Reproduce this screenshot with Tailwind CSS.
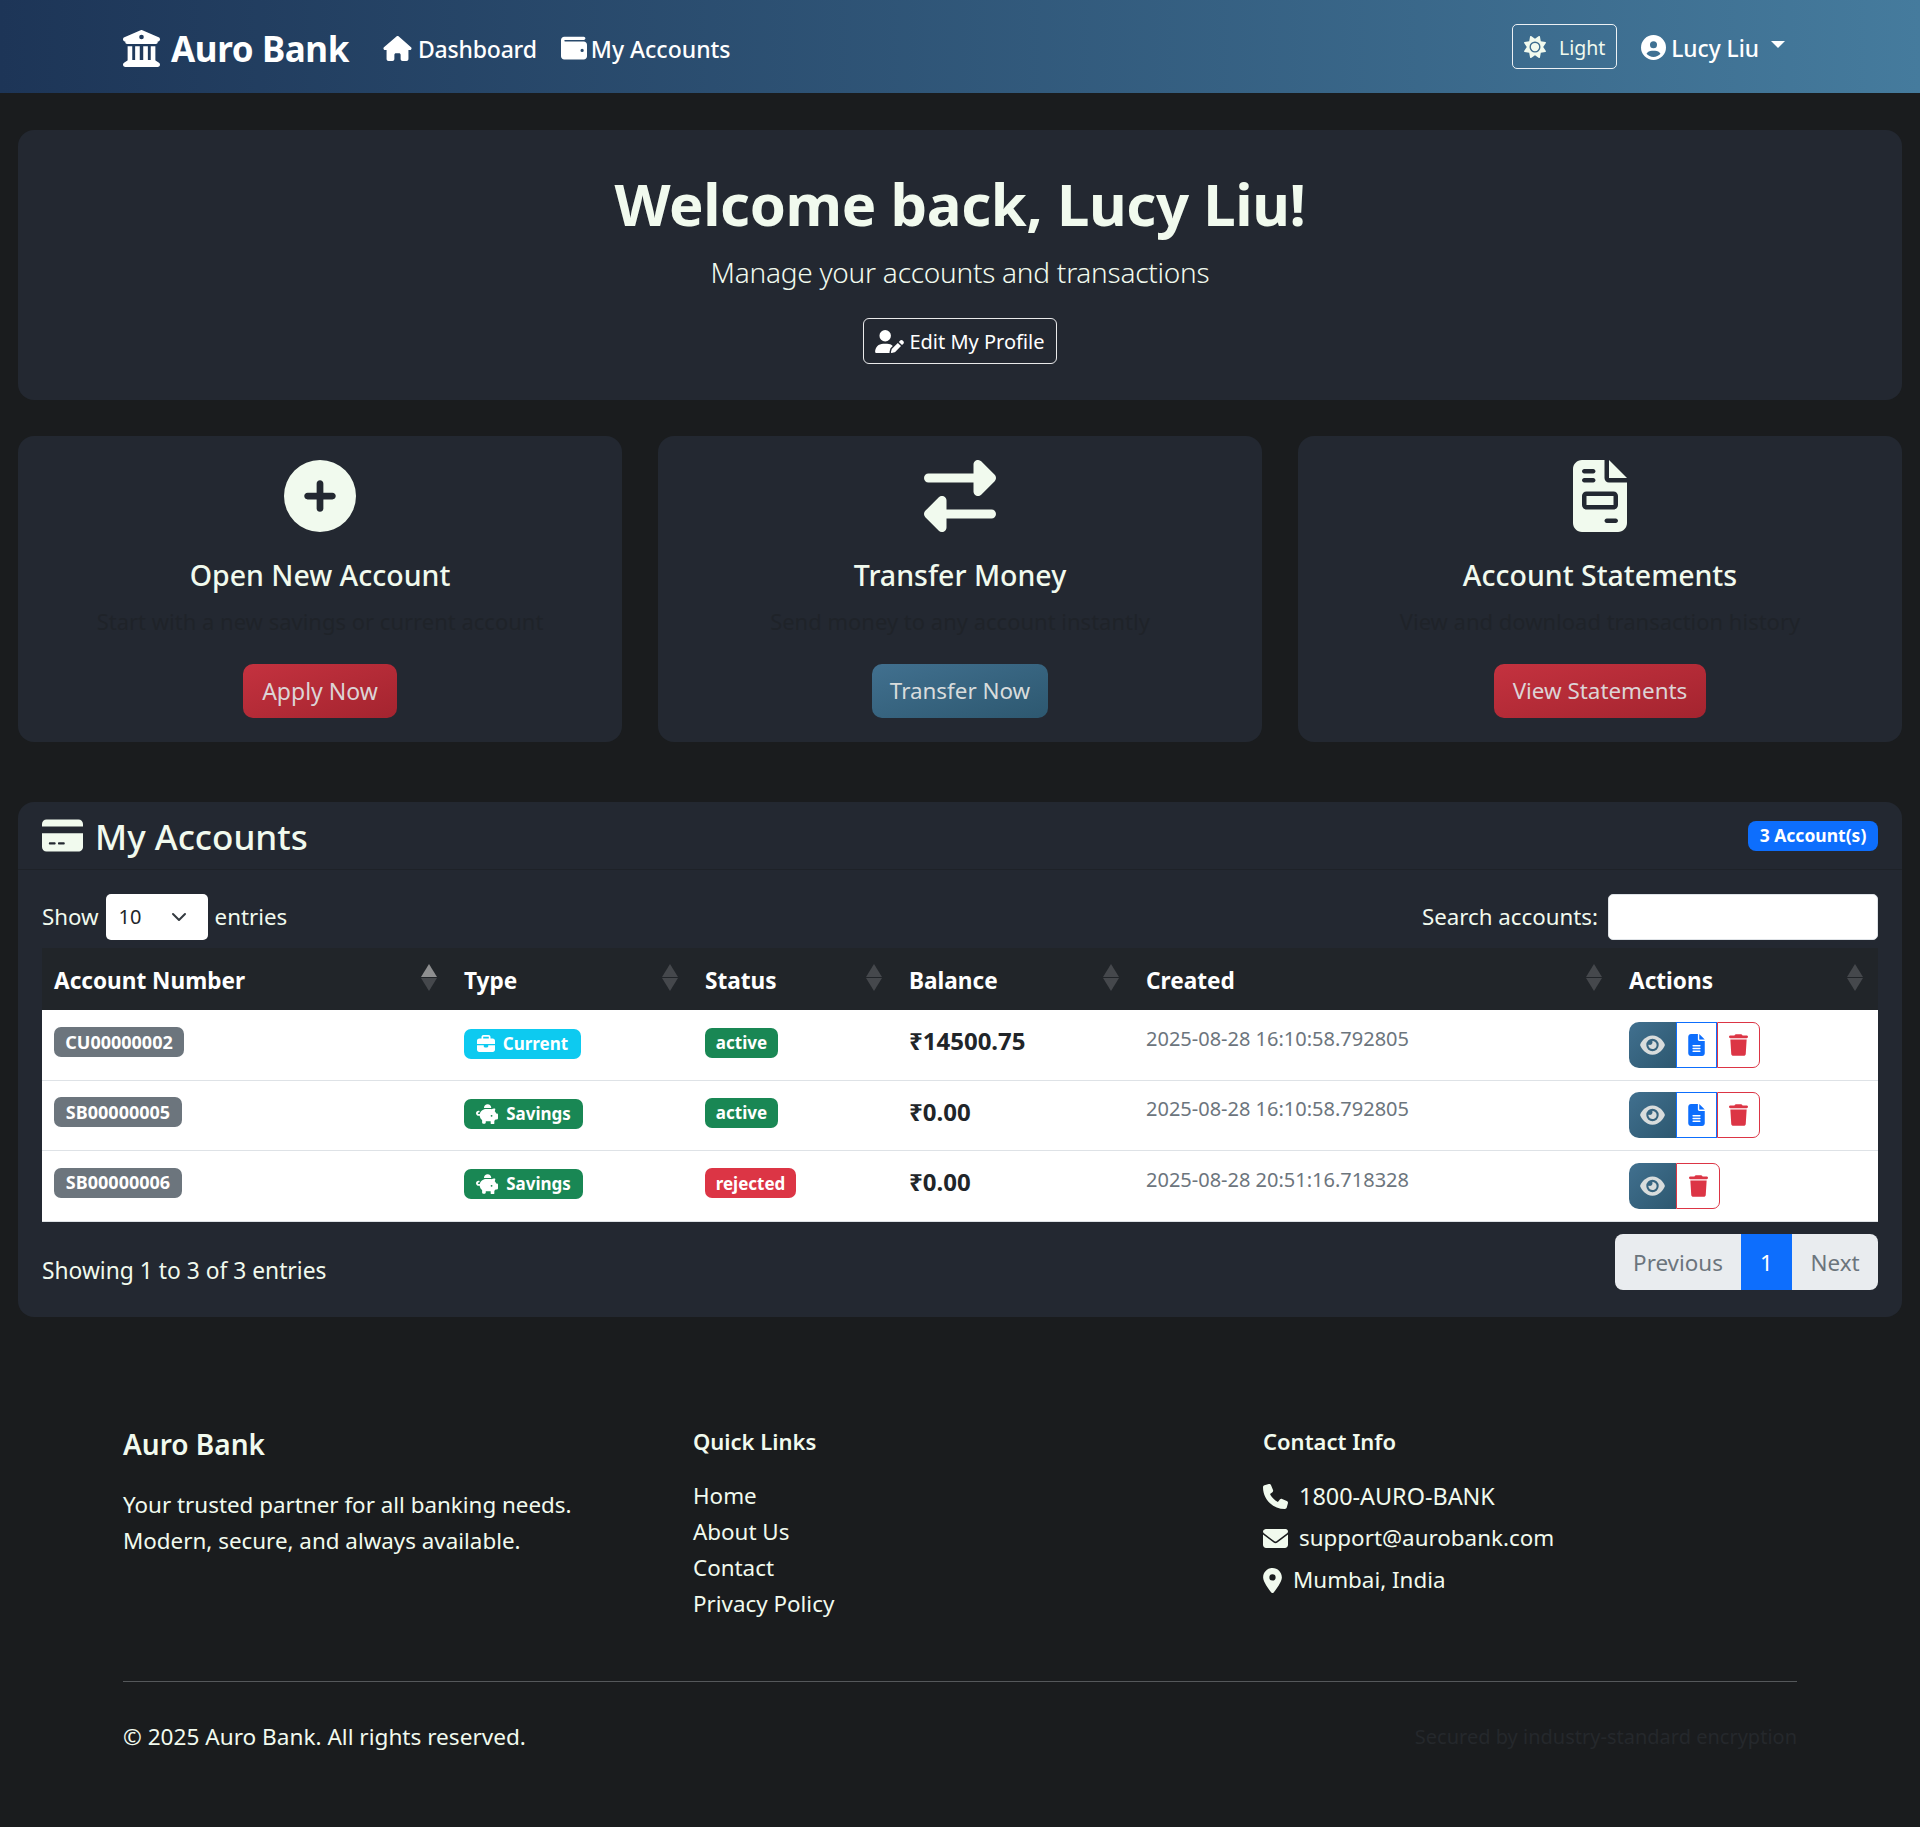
<!DOCTYPE html>
<html lang="en">
<head>
  <meta charset="UTF-8" />
  <meta name="viewport" content="width=device-width, initial-scale=1.0" />
  <title>Dashboard - Auro Bank</title>
  <script src="https://cdn.jsdelivr.net/npm/@tailwindcss/browser@4"></script>
</head>
<body class="bg-[#1a1c1e] text-[#f1faee] font-['Noto_Sans',sans-serif] text-[20px] min-h-[1827px]">
  <!-- icons -->
  <svg class="hidden">
    <symbol id="i-bank" viewBox="0 0 512 512"><path d="M243.4 2.6l-224 96c-14 6-21.8 21-18.7 35.8S16.8 160 32 160v8c0 13.3 10.7 24 24 24H456c13.3 0 24-10.7 24-24v-8c15.2 0 28.3-10.7 31.3-25.6s-4.8-29.9-18.7-35.8l-224-96c-8-3.4-17.2-3.4-25.2 0zM128 224H64V420.3c-.6 .3-1.2 .7-1.8 1.1l-48 32c-11.7 7.8-17 22.4-12.9 35.9S17.9 512 32 512H480c14.1 0 26.5-9.2 30.6-22.7s-1.1-28.1-12.9-35.9l-48-32c-.6-.4-1.2-.7-1.8-1.1V224H384V416H344V224H280V416H232V224H168V416H128V224zM256 64a32 32 0 1 1 0 64 32 32 0 1 1 0-64z"/></symbol>
    <symbol id="i-house" viewBox="0 0 576 512"><path d="M575.8 255.5c0 18-15 32.1-32 32.1h-32l.7 160.2c0 2.7-.2 5.4-.5 8.1V472c0 22.1-17.9 40-40 40H456c-1.1 0-2.2 0-3.3-.1c-1.4 .1-2.8 .1-4.2 .1H416 392c-22.1 0-40-17.9-40-40V448 384c0-17.7-14.3-32-32-32H256c-17.7 0-32 14.3-32 32v64 24c0 22.1-17.9 40-40 40H160 128.1c-1.5 0-3-.1-4.5-.2c-1.2 .1-2.4 .2-3.6 .2H104c-22.1 0-40-17.9-40-40V360c0-.9 0-1.9 .1-2.8V287.6H32c-18 0-32-14-32-32.1c0-9 3-17 10-24L266.4 8c7-7 15-8 22-8s15 2 21 7L564.8 231.5c8 7 12 15 11 24z"/></symbol>
    <symbol id="i-wallet" viewBox="0 0 512 512"><path d="M64 32C28.7 32 0 60.7 0 96V416c0 35.3 28.7 64 64 64H448c35.3 0 64-28.7 64-64V192c0-35.3-28.7-64-64-64H80c-8.8 0-16-7.2-16-16s7.2-16 16-16H448c17.7 0 32-14.3 32-32s-14.3-32-32-32H64zM416 272a32 32 0 1 1 0 64 32 32 0 1 1 0-64z"/></symbol>
    <symbol id="i-sun" viewBox="0 0 512 512"><path d="M361.5 1.2c5 2.1 8.6 6.6 9.6 11.9L391 121l107.9 19.8c5.3 1 9.8 4.6 11.9 9.6s1.5 10.7-1.6 15.2L446.9 256l62.3 90.3c3.1 4.5 3.7 10.2 1.6 15.2s-6.6 8.6-11.9 9.6L391 391 371.1 498.9c-1 5.3-4.6 9.8-9.6 11.9s-10.7 1.5-15.2-1.6L256 446.9l-90.3 62.3c-4.5 3.1-10.2 3.7-15.2 1.6s-8.6-6.6-9.6-11.9L121 391 13.1 371.1c-5.3-1-9.8-4.6-11.9-9.6s-1.5-10.7 1.6-15.2L65.1 256 2.8 165.7c-3.1-4.5-3.7-10.2-1.6-15.2s6.6-8.6 11.9-9.6L121 121 140.9 13.1c1-5.3 4.6-9.8 9.6-11.9s10.7-1.5 15.2 1.6L256 65.1 346.3 2.8c4.5-3.1 10.2-3.7 15.2-1.6zM160 256a96 96 0 1 1 192 0 96 96 0 1 1 -192 0zm224 0a128 128 0 1 0 -256 0 128 128 0 1 0 256 0z"/></symbol>
    <symbol id="i-user" viewBox="0 0 512 512"><path d="M399 384.2C376.9 345.8 335.4 320 288 320H224c-47.4 0-88.9 25.8-111 64.2c35.2 39.2 86.2 63.8 143 63.8s107.8-24.7 143-63.8zM0 256a256 256 0 1 1 512 0A256 256 0 1 1 0 256zm256 16a72 72 0 1 0 0-144 72 72 0 1 0 0 144z"/></symbol>
    <symbol id="i-userpen" viewBox="0 0 640 512"><path d="M224 256A128 128 0 1 0 224 0a128 128 0 1 0 0 256zm-45.7 48C79.8 304 0 383.8 0 482.3C0 498.7 13.3 512 29.7 512H322.8c-3.1-8.8-3.7-18.4-1.4-27.8l15-60.1c2.8-11.3 8.6-21.5 16.8-29.7l40.3-40.3c-32.1-31-75.7-50.1-123.9-50.1H178.3zm435.5-68.3c-15.6-15.6-40.9-15.6-56.6 0l-29.4 29.4 71 71 29.4-29.4c15.6-15.6 15.6-40.9 0-56.6l-14.4-14.4zM375.9 417c-4.1 4.1-7 9.2-8.4 14.9l-15 60.1c-1.4 5.5 .2 11.2 4.2 15.2s9.7 5.6 15.2 4.2l60.1-15c5.6-1.4 10.8-4.3 14.9-8.4L576.1 358.7l-71-71L375.9 417z"/></symbol>
    <symbol id="i-plus" viewBox="0 0 512 512"><path d="M256 512A256 256 0 1 0 256 0a256 256 0 1 0 0 512zM232 344V280H168c-13.3 0-24-10.7-24-24s10.7-24 24-24h64V168c0-13.3 10.7-24 24-24s24 10.7 24 24v64h64c13.3 0 24 10.7 24 24s-10.7 24-24 24H280v64c0 13.3-10.7 24-24 24s-24-10.7-24-24z"/></symbol>
    <symbol id="i-exchange" viewBox="0 0 512 512"><path d="M32 96l320 0V32c0-12.900 7.800-24.600 19.800-29.600s25.700-2.200 34.900 6.900l96 96c6 6 9.400 14.100 9.400 22.600s-3.400 16.700-9.400 22.600l-96 96c-9.200 9.200-22.900 11.900-34.900 6.900s-19.800-16.600-19.800-29.600V160L32 160c-17.700 0-32-14.300-32-32s14.300-32 32-32zM480 352c17.700 0 32 14.300 32 32s-14.300 32-32 32H160v64c0 12.900-7.800 24.600-19.800 29.600s-25.700 2.200-34.900-6.900l-96-96c-6-6-9.400-14.100-9.400-22.600s3.400-16.700 9.400-22.600l96-96c9.200-9.200 22.900-11.900 34.900-6.900s19.800 16.600 19.800 29.600l0 64H480z"/></symbol>
    <symbol id="i-invoice" viewBox="0 0 384 512"><path d="M64 0C28.700 0 0 28.700 0 64V448c0 35.300 28.700 64 64 64H320c35.300 0 64-28.700 64-64V160H256c-17.700 0-32-14.300-32-32V0H64zM256 0V128H384L256 0zM80 64h64c8.800 0 16 7.200 16 16s-7.200 16-16 16H80c-8.800 0-16-7.200-16-16s7.200-16 16-16zm0 64h64c8.800 0 16 7.200 16 16s-7.200 16-16 16H80c-8.800 0-16-7.200-16-16s7.200-16 16-16zm16 96H288c17.700 0 32 14.300 32 32v64c0 17.700-14.300 32-32 32H96c-17.700 0-32-14.300-32-32V256c0-17.700 14.300-32 32-32zm0 32v64H288V256H96zM240 416h64c8.800 0 16 7.200 16 16s-7.200 16-16 16H240c-8.800 0-16-7.200-16-16s7.200-16 16-16z"/></symbol>
    <symbol id="i-card" viewBox="0 0 576 512"><path d="M64 32C28.700 32 0 60.700 0 96v32H576V96c0-35.300-28.700-64-64-64H64zM576 224H0V416c0 35.300 28.700 64 64 64H512c35.300 0 64-28.700 64-64V224zM112 352h64c8.800 0 16 7.200 16 16s-7.200 16-16 16H112c-8.800 0-16-7.200-16-16s7.200-16 16-16zm112 16c0-8.800 7.200-16 16-16H304c8.800 0 16 7.200 16 16s-7.200 16-16 16H240c-8.800 0-16-7.200-16-16z"/></symbol>
    <symbol id="i-brief" viewBox="0 0 512 512"><path d="M184 48H328c4.400 0 8 3.600 8 8V96H176V56c0-4.400 3.600-8 8-8zm-56 8V96H64C28.700 96 0 124.700 0 160v96H192 320 512V160c0-35.300-28.700-64-64-64H384V56c0-30.900-25.100-56-56-56H184c-30.900 0-56 25.100-56 56zM512 288H320v32c0 17.700-14.300 32-32 32H224c-17.700 0-32-14.300-32-32V288H0V416c0 35.300 28.700 64 64 64H448c35.300 0 64-28.700 64-64V288z"/></symbol>
    <symbol id="i-piggy" viewBox="0 0 576 512"><path d="M400 96v.7c-5.300-.4-10.600-.7-16-.7H256c-16.500 0-32.500 2.100-47.800 6-.1-2-.2-4-.2-6 0-53 43-96 96-96s96 43 96 96zm-16 32c3.500 0 7 .1 10.400 .3 4.200 .3 8.400 .7 12.600 1.300C424.600 116.900 447 112 472 112h18c10.400 0 18 9.800 15.500 19.900l-13.800 55.200c15.800 14.800 28.700 32.800 37.500 52.900H544c17.700 0 32 14.300 32 32v96c0 17.700-14.300 32-32 32H512c-9.100 12.100-19.900 22.900-32 32v64c0 17.700-14.300 32-32 32H416c-17.700 0-32-14.300-32-32V448H256v32c0 17.700-14.300 32-32 32H192c-17.700 0-32-14.300-32-32V416c-34.900-26.200-58.700-66.300-63.200-112H68c-37.600 0-68-30.400-68-68s30.400-68 68-68h4c13.300 0 24 10.700 24 24s-10.700 24-24 24H68c-11 0-20 9-20 20s9 20 20 20h31.200c12.100-59.800 57.700-107.500 116.300-122.800C230.400 131 243 128 256 128H384zm48 176a24 24 0 1 0-48 0 24 24 0 1 0 48 0z"/></symbol>
    <symbol id="i-eye" viewBox="0 0 576 512"><path d="M288 32c-80.800 0-145.500 36.800-192.600 80.600C48.600 156 17.300 208 2.500 243.700c-3.300 7.900-3.300 16.700 0 24.600C17.300 304 48.600 356 95.400 399.400C142.500 443.200 207.200 480 288 480s145.500-36.800 192.600-80.600c46.800-43.500 78.100-95.400 93-131.100c3.300-7.900 3.300-16.700 0-24.600c-14.900-35.700-46.200-87.700-93-131.100C433.500 68.800 368.800 32 288 32zM144 256a144 144 0 1 1 288 0 144 144 0 1 1 -288 0zm144-64c0 35.300-28.700 64-64 64c-7.100 0-13.900-1.200-20.300-3.300c-5.500-1.800-11.900 1.600-11.700 7.400c.3 6.900 1.300 13.800 3.200 20.700c13.700 51.200 66.400 81.600 117.600 67.900s81.600-66.400 67.900-117.600c-11.100-41.500-47.800-69.400-88.600-71.100c-5.800-.2-9.200 6.100-7.400 11.700c2.100 6.400 3.300 13.200 3.300 20.300z"/></symbol>
    <symbol id="i-file" viewBox="0 0 384 512"><path d="M64 0C28.700 0 0 28.700 0 64V448c0 35.300 28.700 64 64 64H320c35.300 0 64-28.700 64-64V160H256c-17.700 0-32-14.300-32-32V0H64zM256 0V128H384L256 0zM112 256H272c8.800 0 16 7.200 16 16s-7.200 16-16 16H112c-8.800 0-16-7.200-16-16s7.200-16 16-16zm0 64H272c8.800 0 16 7.200 16 16s-7.200 16-16 16H112c-8.800 0-16-7.200-16-16s7.200-16 16-16zm0 64H272c8.800 0 16 7.200 16 16s-7.200 16-16 16H112c-8.800 0-16-7.200-16-16s7.200-16 16-16z"/></symbol>
    <symbol id="i-trash" viewBox="0 0 448 512"><path d="M135.200 17.700L128 32H32C14.300 32 0 46.300 0 64S14.300 96 32 96H416c17.700 0 32-14.300 32-32s-14.300-32-32-32H320l-7.200-14.300C307.400 6.800 296.300 0 284.200 0H163.800c-12.100 0-23.200 6.800-28.600 17.700zM416 128H32L53.200 467c1.600 25.300 22.600 45 47.900 45H346.900c25.300 0 46.300-19.700 47.900-45L416 128z"/></symbol>
    <symbol id="i-phone" viewBox="0 0 512 512"><path d="M164.900 24.600c-7.700-18.600-28-28.500-47.400-23.200l-88 24C12.100 30.200 0 46 0 64C0 311.400 200.600 512 448 512c18 0 33.800-12.100 38.600-29.500l24-88c5.300-19.400-4.600-39.700-23.200-47.400l-96-40c-16.300-6.800-35.200-2.100-46.300 11.600L304.700 368C234.300 334.700 177.300 277.700 144 207.300L193.300 167c13.700-11.200 18.400-30 11.600-46.300l-40-96z"/></symbol>
    <symbol id="i-mail" viewBox="0 0 512 512"><path d="M48 64C21.500 64 0 85.500 0 112c0 15.100 7.100 29.300 19.200 38.400L236.800 313.600c11.400 8.500 27 8.500 38.400 0L492.800 150.400c12.100-9.100 19.200-23.300 19.200-38.400c0-26.500-21.500-48-48-48H48zM0 176V384c0 35.300 28.700 64 64 64H448c35.300 0 64-28.700 64-64V176L294.400 339.200c-22.800 17.100-54 17.100-76.800 0L0 176z"/></symbol>
    <symbol id="i-pin" viewBox="0 0 384 512"><path d="M215.700 499.200C267 435 384 279.400 384 192C384 86 298 0 192 0S0 86 0 192c0 87.400 117 243 168.300 307.200c12.300 15.300 35.100 15.300 47.400 0zM192 128a64 64 0 1 1 0 128 64 64 0 1 1 0-128z"/></symbol>
    <symbol id="i-sort" viewBox="0 0 16 27"><path d="M8 0L16 13H0z"/><path d="M0 14H16L8 27z"/></symbol>
  </svg>

  <!-- Navbar -->
  <nav class="h-[93px] bg-gradient-to-r from-[#1d3557] to-[#457b9d] flex items-center justify-between pl-[123px] pr-[135px] text-white">
    <div class="flex items-center mt-[5px]">
      <a class="flex items-center gap-[11px] text-[35px] tracking-[-0.4px] font-bold mr-[34px]">
        <svg class="w-[37px] h-[37px] fill-current -mt-[2px]"><use href="#i-bank"/></svg>Auro Bank
      </a>
      <a class="flex items-center gap-[6px] text-[23px] tracking-[-0.2px] font-medium mr-[24px]">
        <svg class="w-[29px] h-[25px] fill-current -mt-[2px]"><use href="#i-house"/></svg>Dashboard
      </a>
      <a class="flex items-center gap-[4px] text-[23px] font-medium">
        <svg class="w-[26px] h-[26px] fill-current -mt-[2px]"><use href="#i-wallet"/></svg>My Accounts
      </a>
    </div>
    <div class="flex items-center">
      <button class="w-[105px] h-[45px] pt-[2px] border border-white/90 rounded-[5px] flex items-center justify-center gap-[13px] text-[19.5px] text-[#f1faee] mr-[24px]">
        <svg class="w-[22px] h-[22px] fill-current -mt-[2px]"><use href="#i-sun"/></svg>Light
      </button>
      <a class="flex items-center gap-[5px] text-[22.7px] font-medium mt-[5px]">
        <svg class="w-[25px] h-[25px] fill-current -mt-[3px]"><use href="#i-user"/></svg>Lucy Liu
        <span class="ml-[7px] mb-[9px] border-x-[7px] border-t-[7px] border-x-transparent border-t-white"></span>
      </a>
    </div>
  </nav>

  <main class="px-[18px]">
    <!-- Welcome -->
    <section class="mt-[37px] h-[270px] bg-[#232831] rounded-[16px] flex flex-col items-center pt-[38px]">
      <h1 class="text-[58px] tracking-[-0.4px] leading-[72px] font-bold">Welcome back, Lucy Liu!</h1>
      <p class="mt-[13px] text-[28px] tracking-[-0.25px] leading-[38px] font-light">Manage your accounts and transactions</p>
      <a class="mt-[27px] w-[194px] h-[46px] pt-[1px] border border-white/90 rounded-[6px] flex items-center justify-center gap-[5px] text-[20px] text-white">
        <svg class="w-[29px] h-[23px] fill-current"><use href="#i-userpen"/></svg>Edit My Profile
      </a>
    </section>

    <!-- Quick actions -->
    <section class="mt-[36px] grid grid-cols-3 gap-[36px]">
      <div class="h-[306px] bg-[#232831] rounded-[16px] flex flex-col items-center pt-[24px]">
        <svg class="w-[72px] h-[72px] fill-current"><use href="#i-plus"/></svg>
        <h5 class="mt-[24px] text-[28.5px] leading-[38px] font-medium">Open New Account</h5>
        <p class="mt-[12px] text-[22px] leading-[30px] text-[#1f2329]">Start with a new savings or current account</p>
        <a class="mt-[28px] w-[154px] h-[54px] rounded-[10px] bg-gradient-to-br from-[#c4323f] to-[#a4242f] text-[#dcd4d6] text-[23px] flex items-center justify-center">Apply Now</a>
      </div>
      <div class="h-[306px] bg-[#232831] rounded-[16px] flex flex-col items-center pt-[24px]">
        <svg class="w-[72px] h-[72px] fill-current"><use href="#i-exchange"/></svg>
        <h5 class="mt-[24px] text-[28.5px] leading-[38px] font-medium">Transfer Money</h5>
        <p class="mt-[12px] text-[22px] leading-[30px] text-[#1f2329]">Send money to any account instantly</p>
        <a class="mt-[28px] w-[176px] h-[54px] rounded-[10px] bg-gradient-to-br from-[#41708f] to-[#2d5870] text-[#d8dcdc] text-[22.4px] flex items-center justify-center">Transfer Now</a>
      </div>
      <div class="h-[306px] bg-[#232831] rounded-[16px] flex flex-col items-center pt-[24px]">
        <svg class="w-[54px] h-[72px] fill-current"><use href="#i-invoice"/></svg>
        <h5 class="mt-[24px] text-[28.5px] leading-[38px] font-medium">Account Statements</h5>
        <p class="mt-[12px] text-[22px] leading-[30px] text-[#1f2329]">View and download transaction history</p>
        <a class="mt-[28px] w-[212px] h-[54px] rounded-[10px] bg-gradient-to-br from-[#c4323f] to-[#a4242f] text-[#dcd4d6] text-[22.4px] flex items-center justify-center">View Statements</a>
      </div>
    </section>

    <!-- Accounts table -->
    <section class="mt-[60px] h-[515px] bg-[#232831] rounded-[16px]">
      <div class="h-[68px] border-b border-[#1e2228] flex items-center justify-between px-[24px]">
        <h4 class="flex items-center gap-[12px] text-[35px] font-medium">
          <svg class="w-[41px] h-[37px] fill-current"><use href="#i-card"/></svg><span class="pt-[3px]">My Accounts</span>
        </h4>
        <span class="w-[130px] h-[30px] rounded-[8px] bg-[#0d6efd] text-white text-[17.5px] font-bold flex items-center justify-center">3 Account(s)</span>
      </div>
      <div class="px-[24px]">
        <div class="mt-[24px] h-[46px] flex items-center justify-between">
          <div class="flex items-center text-[22.3px]">
            Show
            <span class="ml-[7px] mr-[7px] w-[102px] h-[46px] bg-white rounded-[5px] text-[#212529] text-[20px] flex items-center justify-between pl-[13px] pr-[21px]">
              10
              <svg class="w-[16px] h-[16px]" viewBox="0 0 16 16" fill="none" stroke="#343a40" stroke-width="2" stroke-linecap="round" stroke-linejoin="round"><path d="M2 5l6 6 6-6"/></svg>
            </span>
            entries
          </div>
          <div class="flex items-center text-[22.3px]">
            Search accounts:
            <input class="ml-[10px] w-[270px] h-[46px] bg-white rounded-[5px] border border-[#dee2e6]" />
          </div>
        </div>

        <table class="mt-[8px] w-[1836px] table-fixed border-collapse">
          <colgroup><col class="w-[410px]"><col class="w-[241px]"><col class="w-[204px]"><col class="w-[237px]"><col class="w-[483px]"><col class="w-[261px]"></colgroup>
          <thead class="bg-[#212529] text-white text-left text-[22.6px]">
            <tr class="h-[62px]">
              <th class="px-[12px] pt-[2px] font-bold"><div class="flex items-center justify-between pr-[3px]"><span class="pt-[2px]">Account Number</span><svg class="w-[16px] h-[27px] -mt-[4px]" viewBox="0 0 16 27"><path d="M8 0L16 13H0z" fill="#8e8f90"/><path d="M0 14H16L8 27z" fill="#45484c"/></svg></div></th>
              <th class="px-[12px] pt-[2px] font-bold"><div class="flex items-center justify-between pr-[3px]"><span class="pt-[2px]">Type</span><svg class="w-[16px] h-[27px] -mt-[4px] text-[#45484c] fill-current"><use href="#i-sort"/></svg></div></th>
              <th class="px-[12px] pt-[2px] font-bold"><div class="flex items-center justify-between pr-[3px]"><span class="pt-[2px]">Status</span><svg class="w-[16px] h-[27px] -mt-[4px] text-[#45484c] fill-current"><use href="#i-sort"/></svg></div></th>
              <th class="px-[12px] pt-[2px] font-bold"><div class="flex items-center justify-between pr-[3px]"><span class="pt-[2px]">Balance</span><svg class="w-[16px] h-[27px] -mt-[4px] text-[#45484c] fill-current"><use href="#i-sort"/></svg></div></th>
              <th class="px-[12px] pt-[2px] font-bold"><div class="flex items-center justify-between pr-[3px]"><span class="pt-[2px]">Created</span><svg class="w-[16px] h-[27px] -mt-[4px] text-[#45484c] fill-current"><use href="#i-sort"/></svg></div></th>
              <th class="px-[12px] pt-[2px] font-bold"><div class="flex items-center justify-between pr-[3px]"><span class="pt-[2px]">Actions</span><svg class="w-[16px] h-[27px] -mt-[4px] text-[#45484c] fill-current"><use href="#i-sort"/></svg></div></th>
            </tr>
          </thead>
          <tbody class="bg-white text-[#212529]">
            <tr class="h-[70px] border-b border-[#dee2e6]">
              <td class="px-[12px] pb-[6px]"><span class="inline-flex items-center justify-center w-[130px] h-[30px] rounded-[7px] bg-[#6c757d] text-white text-[18px] font-bold">CU00000002</span></td>
              <td class="px-[12px]"><span class="inline-flex items-center justify-center gap-[8px] w-[117px] h-[30px] rounded-[7px] bg-[#0dcaf0] text-white text-[17px] font-bold"><svg class="w-[18px] h-[18px] fill-current"><use href="#i-brief"/></svg>Current</span></td>
              <td class="px-[12px] pb-[5px]"><span class="inline-flex items-center justify-center w-[73px] h-[30px] rounded-[7px] bg-[#198754] text-white text-[17px] font-bold">active</span></td>
              <td class="px-[12px] pb-[7px] text-[24px] font-bold">₹14500.75</td>
              <td class="px-[12px] pb-[12px] text-[20px] text-[#6c757d]">2025-08-28 16:10:58.792805</td>
              <td class="px-[12px]">
                <div class="flex h-[46px]">
                  <a class="w-[47px] rounded-l-[10px] bg-gradient-to-br from-[#41708f] to-[#2d5870] text-[#d8dcdc] flex items-center justify-center"><svg class="w-[25px] h-[22px] fill-current"><use href="#i-eye"/></svg></a>
                  <a class="w-[41px] border border-[#0d6efd] text-[#0d6efd] flex items-center justify-center"><svg class="w-[17px] h-[22px] fill-current"><use href="#i-file"/></svg></a>
                  <a class="w-[43px] border border-[#dc3545] rounded-r-[7px] text-[#dc3545] flex items-center justify-center"><svg class="w-[19px] h-[22px] fill-current"><use href="#i-trash"/></svg></a>
                </div>
              </td>
            </tr>
            <tr class="h-[70px] border-b border-[#dee2e6]">
              <td class="px-[12px] pb-[6px]"><span class="inline-flex items-center justify-center w-[128px] h-[30px] rounded-[7px] bg-[#6c757d] text-white text-[18px] font-bold">SB00000005</span></td>
              <td class="px-[12px]"><span class="inline-flex items-center justify-center gap-[8px] w-[119px] h-[30px] rounded-[7px] bg-[#198754] text-white text-[17px] font-bold"><svg class="w-[22px] h-[20px] fill-current"><use href="#i-piggy"/></svg>Savings</span></td>
              <td class="px-[12px] pb-[5px]"><span class="inline-flex items-center justify-center w-[73px] h-[30px] rounded-[7px] bg-[#198754] text-white text-[17px] font-bold">active</span></td>
              <td class="px-[12px] pb-[7px] text-[24px] font-bold">₹0.00</td>
              <td class="px-[12px] pb-[12px] text-[20px] text-[#6c757d]">2025-08-28 16:10:58.792805</td>
              <td class="px-[12px]">
                <div class="flex h-[46px]">
                  <a class="w-[47px] rounded-l-[10px] bg-gradient-to-br from-[#41708f] to-[#2d5870] text-[#d8dcdc] flex items-center justify-center"><svg class="w-[25px] h-[22px] fill-current"><use href="#i-eye"/></svg></a>
                  <a class="w-[41px] border border-[#0d6efd] text-[#0d6efd] flex items-center justify-center"><svg class="w-[17px] h-[22px] fill-current"><use href="#i-file"/></svg></a>
                  <a class="w-[43px] border border-[#dc3545] rounded-r-[7px] text-[#dc3545] flex items-center justify-center"><svg class="w-[19px] h-[22px] fill-current"><use href="#i-trash"/></svg></a>
                </div>
              </td>
            </tr>
            <tr class="h-[71px] border-b border-[#dee2e6]">
              <td class="px-[12px] pb-[6px]"><span class="inline-flex items-center justify-center w-[128px] h-[30px] rounded-[7px] bg-[#6c757d] text-white text-[18px] font-bold">SB00000006</span></td>
              <td class="px-[12px]"><span class="inline-flex items-center justify-center gap-[8px] w-[119px] h-[30px] rounded-[7px] bg-[#198754] text-white text-[17px] font-bold"><svg class="w-[22px] h-[20px] fill-current"><use href="#i-piggy"/></svg>Savings</span></td>
              <td class="px-[12px] pb-[5px]"><span class="inline-flex items-center justify-center w-[91px] h-[30px] rounded-[7px] bg-[#dc3545] text-white text-[17px] font-bold">rejected</span></td>
              <td class="px-[12px] pb-[7px] text-[24px] font-bold">₹0.00</td>
              <td class="px-[12px] pb-[12px] text-[20px] text-[#6c757d]">2025-08-28 20:51:16.718328</td>
              <td class="px-[12px]">
                <div class="flex h-[46px]">
                  <a class="w-[47px] rounded-l-[10px] bg-gradient-to-br from-[#41708f] to-[#2d5870] text-[#d8dcdc] flex items-center justify-center"><svg class="w-[25px] h-[22px] fill-current"><use href="#i-eye"/></svg></a>
                  <a class="w-[44px] border border-[#dc3545] rounded-r-[7px] text-[#dc3545] flex items-center justify-center"><svg class="w-[19px] h-[22px] fill-current"><use href="#i-trash"/></svg></a>
                </div>
              </td>
            </tr>
          </tbody>
        </table>

        <div class="mt-[12px] flex items-start justify-between">
          <div class="mt-[19px] text-[22.8px] leading-[36px]">Showing 1 to 3 of 3 entries</div>
          <div class="flex h-[56px] text-[22.4px]">
            <a class="w-[126px] pt-[2px] rounded-l-[8px] bg-[#e9ecef] text-[#6c757d] flex items-center justify-center">Previous</a>
            <a class="w-[51px] pt-[2px] bg-[#0d6efd] text-white flex items-center justify-center">1</a>
            <a class="w-[86px] pt-[2px] rounded-r-[8px] bg-[#e9ecef] text-[#6c757d] flex items-center justify-center">Next</a>
          </div>
        </div>
      </div>
    </section>
  </main>

  <!-- Footer -->
  <footer class="mt-[107px] px-[123px] text-[22.4px]">
    <div class="grid grid-cols-[570px_570px_1fr]">
      <div>
        <h5 class="text-[28px] leading-[40px] font-semibold">Auro Bank</h5>
        <p class="mt-[23px] leading-[36px]">Your trusted partner for all banking needs.<br>Modern, secure, and always available.</p>
      </div>
      <div>
        <h6 class="mt-[1px] text-[22px] leading-[32px] font-semibold">Quick Links</h6>
        <ul class="mt-[21px] leading-[36px]">
          <li>Home</li>
          <li>About Us</li>
          <li>Contact</li>
          <li>Privacy Policy</li>
        </ul>
      </div>
      <div>
        <h6 class="mt-[1px] text-[22px] leading-[32px] font-semibold">Contact Info</h6>
        <ul class="mt-[21px] leading-[36px] flex flex-col gap-[6px]">
          <li class="flex items-center gap-[11px]"><svg class="w-[25px] h-[25px] fill-current"><use href="#i-phone"/></svg><span class="text-[23.4px]">1800-AURO-BANK</span></li>
          <li class="flex items-center gap-[11px]"><svg class="w-[25px] h-[25px] fill-current"><use href="#i-mail"/></svg>support@aurobank.com</li>
          <li class="flex items-center gap-[11px]"><svg class="w-[19px] h-[25px] fill-current"><use href="#i-pin"/></svg>Mumbai, India</li>
        </ul>
      </div>
    </div>
    <hr class="mt-[59px] border-[#55585b]" />
    <div class="mt-[38px] flex items-center justify-between">
      <span class="text-[22.6px]">© 2025 Auro Bank. All rights reserved.</span>
      <span class="text-[20px] text-[#25282c]">Secured by industry-standard encryption</span>
    </div>
  </footer>
</body>
</html>
